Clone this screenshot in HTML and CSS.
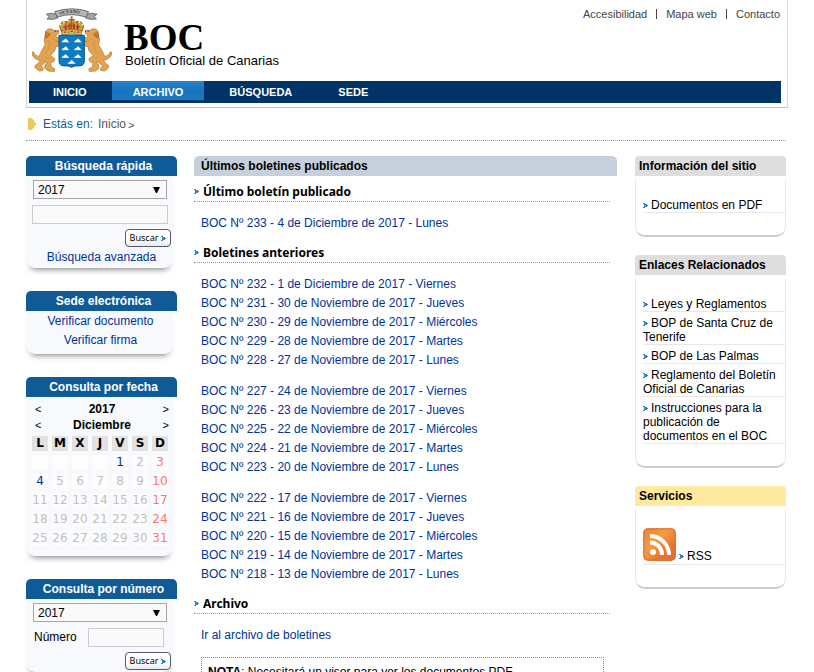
FILE: index.html
```html
<!DOCTYPE html>
<html lang="es">
<head>
<meta charset="utf-8">
<meta name="viewport" content="width=device-width, initial-scale=1">
<title>BOC - Boletín Oficial de Canarias</title>
<link rel="stylesheet" href="styles.css">
</head>
<body>
<svg class="defs" aria-hidden="true">
  <symbol id="arrow" viewBox="0 0 5 5"><path d="M0 0h2v1h2v1h1v1H4v1H2v1H0V4h1V1H0z" fill="#3b83c8"/></symbol>
</svg>
<div class="page">
  <header class="header">
    <div class="top">
      <div class="brand">
        <svg class="crest" viewBox="18 9 246 201" role="img" aria-label="Escudo de Canarias">
          <g fill="#a3a5a9" stroke="#55575b" stroke-width="2.5" stroke-linejoin="round">
            <path d="M92 27 78 24 62 27 71 34 64 42 82 43 97 39z"/>
            <path d="M188 27 202 24 218 27 209 34 216 42 198 43 183 39z"/>
            <path d="M88 19Q140 2 192 19L184 36Q140 21 96 36z" fill="#b3b5b9"/>
          </g>
          <path id="ribbon" d="M103 29Q140 18 182 29" fill="none"/>
          <text class="motto"><textPath href="#ribbon">OCEANO</textPath></text>
          <g fill="#dda035" stroke="#74521f" stroke-width="3" stroke-linejoin="round">
            <path d="M111 84Q99 65 107 55Q113 46 124 50Q132 41 140 43Q148 41 156 50Q167 46 173 55Q181 65 169 84z"/>
            <path d="M126 83Q117 60 126 51M154 83Q163 60 154 51M140 84V44M112 68Q140 58 168 68" fill="none"/>
          </g>
          <g fill="#c33435"><path d="M117 64q4-7 7-2l2 13-6 1zM130 58l6-7v22h-6zM144 51l6 7v15h-6zM156 62q4-5 7 2l-3 12-6-1z"/></g>
          <path d="M110 77Q140 70 170 77V91Q140 85 110 91z" fill="#e5bd52" stroke="#74521f" stroke-width="2"/>
          <path d="M116 82h8M156 82h8M136 80h8" stroke="#bd3335" stroke-width="4"/>
          <path d="M129 82h4M147 82h4" stroke="#27834b" stroke-width="4"/>
          <g fill="#edf5f6"><circle cx="106" cy="59" r="3"/><circle cx="116" cy="51" r="3"/><circle cx="128" cy="46" r="3"/><circle cx="152" cy="46" r="3"/><circle cx="164" cy="51" r="3"/><circle cx="174" cy="59" r="3"/></g>
          <path d="M140 33v11M136 37h8" stroke="#926725" stroke-width="3"/>
          <g id="dog">
            <path d="M61 88 60 79Q65 71 76 72L87 77 99 77 100 86 91 93 94 99 110 99V109L94 111 108 115V123L91 127 88 140 75 153 81 159 88 164 86 172 75 178 78 190 88 195 87 203 68 202 57 193 59 181 65 177 63 173 54 179 46 186 53 194 51 200 40 202 27 191 28 184 37 178 43 169Q25 167 18 151Q15 142 23 143Q25 155 39 157L48 139 58 121 55 105z" fill="#e2a34f" stroke="#a87135" stroke-width="2" stroke-linejoin="round"/>
            <path d="M61 81Q55 94 61 100Q70 98 74 86" fill="#c97b2c" stroke="#8d5720" stroke-width="2"/>
            <path d="M66 107Q78 119 69 135L57 151M76 102 94 110M59 158 70 164" fill="none" stroke="#c9873f" stroke-width="2"/>
            <path d="M88 79h4M97 79h3" stroke="#50351d" stroke-width="4"/>
          </g>
          <use href="#dog" transform="translate(281 0) scale(-1 1)"/>
          <path d="M101 92H179V170Q179 186 163 186H154Q145 186 140 191Q135 186 126 186H117Q101 186 101 170z" fill="#087cc5" stroke="#164f7e" stroke-width="3"/>
          <g fill="#f8fcfc" stroke="#24577b" stroke-linejoin="round">
            <path id="isle" d="M108 114 112 108 117 106 120 101 126 105 129 109 134 114z"/>
            <use href="#isle" x="38"/><use href="#isle" y="24"/><use href="#isle" x="38" y="24"/><use href="#isle" y="48"/><use href="#isle" x="38" y="48"/><use href="#isle" x="19" y="66"/>
          </g>
        </svg>
        <div class="brand-text"><span class="logo">BOC</span><span class="tagline">Boletín Oficial de Canarias</span></div>
      </div>
      <ul class="tools">
        <li><a href="#">Accesibilidad</a></li>
        <li><a href="#">Mapa web</a></li>
        <li><a href="#">Contacto</a></li>
      </ul>
    </div>
    <nav class="nav">
      <a href="#">INICIO</a>
      <a href="#" class="active">ARCHIVO</a>
      <a href="#">BÚSQUEDA</a>
      <a href="#">SEDE</a>
    </nav>
  </header>

  <div class="crumbs">
    <svg class="crumb-mark" viewBox="0 0 8 12" aria-hidden="true"><path d="M0 0h4v1h1v1h1v2h1v1h1v2H7v1H6v2H5v1H4v1H0z" fill="#efc857"/></svg>
    <span>Estás en:</span> <a href="#">Inicio</a><span class="gt">&gt;</span>
  </div>

  <div class="columns">
    <aside class="left">
      <section class="box">
        <h2>Búsqueda rápida</h2>
        <form class="box-body form">
          <select aria-label="Año"><option>2017</option></select>
          <input type="text" aria-label="Texto a buscar">
          <button type="button">Buscar <svg class="arrow" aria-hidden="true"><use href="#arrow"/></svg></button>
          <a href="#">Búsqueda avanzada</a>
        </form>
      </section>
      <section class="box">
        <h2>Sede electrónica</h2>
        <div class="box-body links">
          <a href="#">Verificar documento</a>
          <a href="#">Verificar firma</a>
        </div>
      </section>
      <section class="box">
        <h2>Consulta por fecha</h2>
        <div class="box-body calendar">
          <div class="step"><a href="#" aria-label="Año anterior">&lt;</a><strong>2017</strong><a href="#" aria-label="Año siguiente">&gt;</a></div>
          <div class="step"><a href="#" aria-label="Mes anterior">&lt;</a><strong>Diciembre</strong><a href="#" aria-label="Mes siguiente">&gt;</a></div>
          <table>
            <thead><tr><th>L</th><th>M</th><th>X</th><th>J</th><th>V</th><th>S</th><th>D</th></tr></thead>
            <tbody>
              <tr><td></td><td></td><td></td><td></td><td><a href="#">1</a></td><td>2</td><td>3</td></tr>
              <tr><td><a href="#">4</a></td><td>5</td><td>6</td><td>7</td><td>8</td><td>9</td><td>10</td></tr>
              <tr><td>11</td><td>12</td><td>13</td><td>14</td><td>15</td><td>16</td><td>17</td></tr>
              <tr><td>18</td><td>19</td><td>20</td><td>21</td><td>22</td><td>23</td><td>24</td></tr>
              <tr><td>25</td><td>26</td><td>27</td><td>28</td><td>29</td><td>30</td><td>31</td></tr>
            </tbody>
          </table>
        </div>
      </section>
      <section class="box">
        <h2>Consulta por número</h2>
        <form class="box-body form">
          <select aria-label="Año del boletín"><option>2017</option></select>
          <div class="field"><label for="numero">Número</label><input type="text" id="numero"></div>
          <button type="button">Buscar <svg class="arrow" aria-hidden="true"><use href="#arrow"/></svg></button>
        </form>
      </section>
    </aside>

    <main class="main">
      <h1>Últimos boletines publicados</h1>
      <h3><svg class="arrow" aria-hidden="true"><use href="#arrow"/></svg>Último boletín publicado</h3>
      <ul class="issues">
        <li><a href="#">BOC Nº 233 - 4 de Diciembre de 2017 - Lunes</a></li>
      </ul>
      <h3><svg class="arrow" aria-hidden="true"><use href="#arrow"/></svg>Boletines anteriores</h3>
      <ul class="issues">
        <li><a href="#">BOC Nº 232 - 1 de Diciembre de 2017 - Viernes</a></li>
        <li><a href="#">BOC Nº 231 - 30 de Noviembre de 2017 - Jueves</a></li>
        <li><a href="#">BOC Nº 230 - 29 de Noviembre de 2017 - Miércoles</a></li>
        <li><a href="#">BOC Nº 229 - 28 de Noviembre de 2017 - Martes</a></li>
        <li><a href="#">BOC Nº 228 - 27 de Noviembre de 2017 - Lunes</a></li>
      </ul>
      <ul class="issues">
        <li><a href="#">BOC Nº 227 - 24 de Noviembre de 2017 - Viernes</a></li>
        <li><a href="#">BOC Nº 226 - 23 de Noviembre de 2017 - Jueves</a></li>
        <li><a href="#">BOC Nº 225 - 22 de Noviembre de 2017 - Miércoles</a></li>
        <li><a href="#">BOC Nº 224 - 21 de Noviembre de 2017 - Martes</a></li>
        <li><a href="#">BOC Nº 223 - 20 de Noviembre de 2017 - Lunes</a></li>
      </ul>
      <ul class="issues">
        <li><a href="#">BOC Nº 222 - 17 de Noviembre de 2017 - Viernes</a></li>
        <li><a href="#">BOC Nº 221 - 16 de Noviembre de 2017 - Jueves</a></li>
        <li><a href="#">BOC Nº 220 - 15 de Noviembre de 2017 - Miércoles</a></li>
        <li><a href="#">BOC Nº 219 - 14 de Noviembre de 2017 - Martes</a></li>
        <li><a href="#">BOC Nº 218 - 13 de Noviembre de 2017 - Lunes</a></li>
      </ul>
      <h3><svg class="arrow" aria-hidden="true"><use href="#arrow"/></svg>Archivo</h3>
      <ul class="issues">
        <li><a href="#">Ir al archivo de boletines</a></li>
      </ul>
      <p class="note"><strong>NOTA</strong>: Necesitará un visor para ver los documentos PDF</p>
    </main>

    <aside class="right">
      <section class="card">
        <h2>Información del sitio</h2>
        <ul>
          <li><a href="#"><svg class="arrow" aria-hidden="true"><use href="#arrow"/></svg>Documentos en PDF</a></li>
        </ul>
      </section>
      <section class="card">
        <h2>Enlaces Relacionados</h2>
        <ul>
          <li><a href="#"><svg class="arrow" aria-hidden="true"><use href="#arrow"/></svg>Leyes y Reglamentos</a></li>
          <li><a href="#"><svg class="arrow" aria-hidden="true"><use href="#arrow"/></svg>BOP de Santa Cruz de Tenerife</a></li>
          <li><a href="#"><svg class="arrow" aria-hidden="true"><use href="#arrow"/></svg>BOP de Las Palmas</a></li>
          <li><a href="#"><svg class="arrow" aria-hidden="true"><use href="#arrow"/></svg>Reglamento del Boletín Oficial de Canarias</a></li>
          <li><a href="#"><svg class="arrow" aria-hidden="true"><use href="#arrow"/></svg>Instrucciones para la publicación de documentos en el BOC</a></li>
        </ul>
      </section>
      <section class="card services">
        <h2>Servicios</h2>
        <ul>
          <li><a href="#" class="rss"><svg class="rss-icon" viewBox="0 0 33 33" aria-hidden="true">
            <defs><linearGradient id="orange" x1="0" y1="0" x2="1" y2="1"><stop offset="0" stop-color="#e88443"/><stop offset=".4" stop-color="#f69a40"/><stop offset=".7" stop-color="#e97430"/><stop offset="1" stop-color="#dc6b32"/></linearGradient></defs>
            <rect width="33" height="33" rx="5" fill="url(#orange)"/><rect x="1" y="1" width="31" height="31" rx="4" fill="none" stroke="#d9743b"/>
            <circle cx="10" cy="24" r="3" fill="#fff"/><path d="M7 14.500a12 12 0 0 1 12 12.500M7 8a19 19 0 0 1 19 19" fill="none" stroke="#fff" stroke-width="4"/></svg><svg class="arrow" aria-hidden="true"><use href="#arrow"/></svg>RSS</a></li>
        </ul>
      </section>
    </aside>
  </div>
</div>
</body>
</html>
```
FILE: styles.css
```css
* { box-sizing: border-box; }

body {
  margin: 0;
  background: #fff;
  color: #000;
  font: 12px/19px "Liberation Sans", Arial, sans-serif;
}

h1, h2, h3, p, ul { margin: 0; padding: 0; }
ul { list-style: none; }
a { color: #039; text-decoration: none; }
.defs { position: absolute; width: 0; height: 0; }
.arrow { width: 5px; height: 5px; flex: none; }

.page { max-width: 762px; margin: 0 auto; }

/* Header */
.header {
  padding-bottom: 4px;
  border: 1px solid #d3d7d9;
  border-top: 0;
  border-bottom-color: #bfbfbf;
}
.top {
  display: flex;
  align-items: flex-start;
  justify-content: space-between;
  height: 81px;
  padding: 7px 7px 0 5px;
}
.brand { display: flex; gap: 12px; padding-top: 1px; }
.crest { width: 80px; height: 66px; }
.motto { font: bold 14px "Liberation Serif", serif; fill: #333; }
.brand-text { display: flex; flex-direction: column; padding-top: 12px; }
.logo { font: bold 37px/35px "Liberation Serif", "Times New Roman", serif; }
.tagline { padding-left: 1px; font-size: 13px; line-height: 12px; }
.tools { display: flex; font-size: 11px; line-height: 14px; }
.tools li { display: flex; align-items: center; }
.tools li + li::before {
  content: "";
  height: 10px;
  margin: 0 9px;
  border-left: 1px solid #444;
}
.tools a { color: #444; }

.nav {
  display: flex;
  gap: 4px;
  margin: 0 6px 0 2px;
  padding-left: 3px;
  background: #036;
  font-size: 11px;
  font-weight: bold;
  line-height: 22px;
}
.nav a { padding: 0 21px; color: #fff; }
.nav .active { background: linear-gradient(#2a82c9, #1873bd 50%, #1c7ac6) no-repeat 0 0 / 100% 19px; }

.crumbs {
  display: flex;
  align-items: center;
  gap: 5px;
  height: 33px;
  margin-right: 2px;
  padding-left: 2px;
  border-bottom: 1px dotted #999;
  color: #1359a0;
}
.crumb-mark { width: 8px; height: 12px; margin-right: 2px; }
.crumbs a { color: #555; }
.crumbs .gt { margin-left: -3px; padding-top: 2px; color: #555; font-size: 11px; }

.columns {
  display: grid;
  grid-template-columns: 151px 1fr 151px;
  gap: 18px;
  padding: 15px 2px 0 0;
}

/* Left column */
.box { margin-bottom: 23px; }
.box h2 {
  padding-left: 4px;
  border-radius: 5px 5px 0 0;
  background: #0f5b97;
  color: #fff;
  font-size: 12px;
  line-height: 20px;
  text-align: center;
}
.box-body {
  margin-right: 4px;
  border-radius: 0 0 9px 9px;
  background: #f7f9fc;
  box-shadow: 0 6px 6px -5px #777;
}
.links { display: flex; flex-direction: column; align-items: center; padding: 1px 0 4px 2px; }
.form { display: flex; flex-direction: column; align-items: flex-start; gap: 5px; padding: 4px 2px 2px 6px; }
.form > a { align-self: center; margin-top: -4px; line-height: 18px; }
select, input {
  height: 19px;
  border: 1px solid #ccc;
  background: #fafafa;
  font: inherit;
}
select {
  width: 134px;
  margin: 0 0 1px 1px;
  padding: 0 4px;
  border-color: #a5a5a5;
  appearance: none;
  background: #fafafa url("data:image/svg+xml,%3Csvg xmlns='http://www.w3.org/2000/svg' width='7' height='6'%3E%3Cpath d='M0 0h7L4 6H3z'/%3E%3C/svg%3E") no-repeat right 6px center;
}
input { width: 136px; }
.form button {
  display: flex;
  align-items: center;
  align-self: flex-end;
  justify-content: center;
  gap: 3px;
  width: 46px;
  height: 18px;
  padding: 0;
  border: 1px solid #555a66;
  border-radius: 4px;
  background: linear-gradient(#fff 60%, #e9e9ee);
  color: #000;
  font: 9px/16px "Noto Sans", Tahoma, sans-serif;
}
.field { display: flex; align-items: center; justify-content: space-between; width: 132px; padding-left: 2px; }
.field input { width: 76px; }

.calendar { padding: 4px 3px 6px 5px; }
.step { display: flex; justify-content: space-between; padding: 0 1px 0 4px; line-height: 16px; }
.step a { color: #000; font-size: 11px; }
.calendar table {
  width: 144px;
  margin: -1px 0 0 -3px;
  table-layout: fixed;
  border-collapse: separate;
  border-spacing: 4px;
  font: 12px/15px "DejaVu Sans", Verdana, sans-serif;
}
.calendar th, .calendar td { height: 15px; padding: 0; text-align: center; }
.calendar th { background: #e2e2e2; }
.calendar td { background: #fdfdfe; color: #c0c0c0; }
.calendar td:last-child { color: #ff7373; }

/* Main column */
.main { margin-left: -1px; }
h1 {
  padding-left: 7px;
  border-radius: 5px 5px 0 0;
  background: #c5d0dc;
  font-size: 12px;
  line-height: 20px;
}
h3 {
  display: flex;
  align-items: center;
  gap: 4px;
  margin-right: 7px;
  padding-top: 6px;
  border-bottom: 1px dotted #999;
  font: bold 12px/19px "Noto Sans", Tahoma, sans-serif;
}
.issues { padding: 12px 7px 0; }
.issues + h3 { margin-top: 4px; }
.note {
  margin: 12px 13px 0 7px;
  padding: 5px 6px;
  border: 1px dotted #888;
}

/* Right column */
.card { margin-bottom: 18px; }
.card h2 {
  padding-left: 4px;
  border-radius: 4px 4px 0 0;
  background: #dedede;
  font-size: 12px;
  line-height: 20px;
}
.card ul {
  margin-top: 4px;
  padding: 14px 0 22px 7px;
  border: 1px solid #e8e8e8;
  border-top: 0;
  border-bottom: 2px solid #ccc;
  border-radius: 0 0 10px 10px;
}
.card li { padding-top: 4px; border-bottom: 1px solid #e8e8e8; line-height: 14px; }
.card a { color: #000; }
.card .arrow { margin-right: 3px; vertical-align: 1px; }
.services h2 { background: #ffe99e; }
.rss { display: flex; align-items: flex-end; padding-bottom: 1px; }
.rss .arrow { margin: 0 3px 4px; }
.rss-icon { width: 33px; height: 33px; margin-bottom: 2px; }
```
